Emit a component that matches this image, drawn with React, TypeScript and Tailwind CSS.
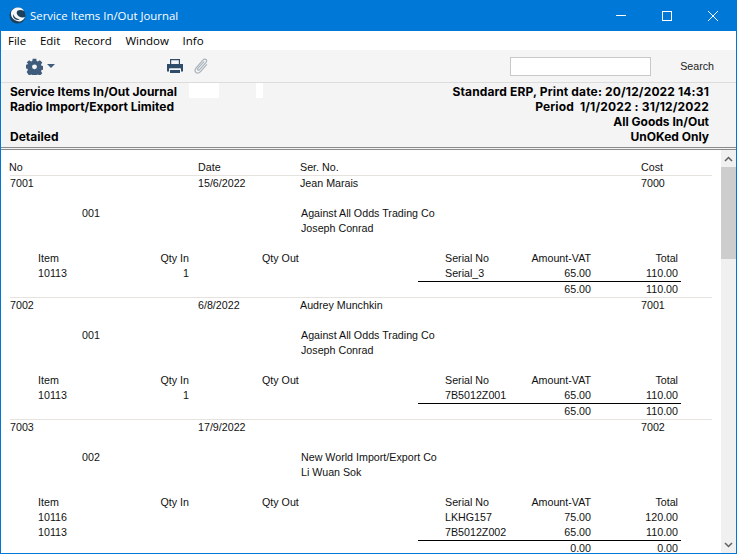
import { ReactNode } from 'react';

const Gear = () => (
  <svg width="17" height="17" viewBox="0 0 24 24" className="text-[#3f5c7c]">
    <path
      fill="currentColor"
      fillRule="evenodd"
      d="M9.500 1h5l.6 3.100 1.700.7 2.700-1.800 3.500 3.500-1.800 2.700.7 1.700 3.100.6v5l-3.100.6-.7 1.700 1.800 2.700-3.500 3.500-2.700-1.800-1.700.7-.6 3.100h-5l-.6-3.100-1.700-.7-2.700 1.800L.9 19.700l1.800-2.700-.7-1.700-3.100-.6v-5l3.100-.6.7-1.700L.9 6.500 4.400 3l2.700 1.800 1.700-.7zM12 9a3.500 3.500 0 1 0 0 7 3.500 3.500 0 0 0 0-7z"
    />
  </svg>
);

const Printer = () => (
  <svg width="16" height="14" viewBox="0 0 16 14">
    <path fill="#2f4d6b" d="M3 0h10v5H3zM0 5h16v7.500h-2V9.500H2v3H0zM3 11h10v3H3z" />
    <path fill="#f5f5f5" d="M4.200 1.200h7.600V5H4.200zM2.500 9.500h11V11h-11z" />
  </svg>
);

const Clip = () => (
  <svg width="14" height="16" viewBox="0 0 15 17" fill="none" stroke="#a9b3bc" strokeWidth="1.300" strokeLinecap="round">
    <path d="M13.500 7L7 14.500c-1.500 1.800-3.800 2-5 .8-1.200-1.200-1-3.200.3-4.800L9.500 2.200c1-1.100 2.500-1.400 3.400-.6.900.8.800 2.200-.2 3.300L6 12.300c-.6.700-1.400.8-1.900.4-.5-.5-.4-1.200.2-1.900L10.500 4" />
  </svg>
);

const Logo = () => (
  <svg width="17" height="17" viewBox="0 0 17 17">
    <circle cx="8.500" cy="8.500" r="8" fill="#1e3f5a" />
    <path fill="#f4f7fa" d="M2 6C2.500 2.500 6 .5 9.500.6c2.500.2 4.500 1.400 5.500 3.400-2-1.300-5-1.500-6.500-.2C7 5 7.500 8 10 9.500c2 1.200 4.500 1.300 6 .6-.8 2-2.500 3.800-5 4.300C6 14.500 1.500 11 2 6z" />
    <path fill="#1e3f5a" d="M4 7c1 3 3.500 5 7 5.500-2.500 1-5.500 0-6.500-2C4 9.500 3.800 8 4 7z" />
  </svg>
);

const Divider = ({ dark = false }: { dark?: boolean }) => (
  <div className={dark ? 'h-px bg-black' : 'h-px bg-[#e6e3de]'} />
);

// main line of a record
const MainRow = ({ no, date, name, cost }: { no: string; date: string; name: string; cost: string }) => (
  <div className="flex h-[15px] items-center pl-[9px]">
    <div className="w-[188px]">{no}</div>
    <div className="w-[102px]">{date}</div>
    <div className="w-[341px]">{name}</div>
    <div>{cost}</div>
  </div>
);

const Line = ({ code, children }: { code?: string; children?: ReactNode }) => (
  <div className="flex h-[15px] items-center pl-[81px]">
    <div className="w-[219px]">{code}</div>
    <div>{children}</div>
  </div>
);

type ItemProps = { item?: string; qtyIn?: string; qtyOut?: string; serial?: string; amount?: string; total?: string };

const ItemRow = ({ item, qtyIn, qtyOut, serial, amount, total }: ItemProps) => (
  <div className="flex h-[15px] items-center pl-[37px]">
    <div className="w-[80px]">{item}</div>
    <div className="w-[71px] text-right">{qtyIn}</div>
    <div className="w-[73px]" />
    <div className="w-[183px]">{qtyOut}</div>
    <div className="w-[80px]">{serial}</div>
    <div className="w-[66px] text-right">{amount}</div>
    <div className="w-[87px] text-right">{total}</div>
  </div>
);

const TotalRule = () => (
  <div className="pl-[417px]">
    <div className="w-[263px]">
      <Divider dark />
    </div>
  </div>
);

type Rec = {
  no: string;
  date: string;
  name: string;
  cost: string;
  code: string;
  company: string;
  contact: string;
  items: ItemProps[];
  sumAmount: string;
  sumTotal: string;
};

const records: Rec[] = [
  {
    no: '7001',
    date: '15/6/2022',
    name: 'Jean Marais',
    cost: '7000',
    code: '001',
    company: 'Against All Odds Trading Co',
    contact: 'Joseph Conrad',
    items: [{ item: '10113', qtyIn: '1', serial: 'Serial_3', amount: '65.00', total: '110.00' }],
    sumAmount: '65.00',
    sumTotal: '110.00',
  },
  {
    no: '7002',
    date: '6/8/2022',
    name: 'Audrey Munchkin',
    cost: '7001',
    code: '001',
    company: 'Against All Odds Trading Co',
    contact: 'Joseph Conrad',
    items: [{ item: '10113', qtyIn: '1', serial: '7B5012Z001', amount: '65.00', total: '110.00' }],
    sumAmount: '65.00',
    sumTotal: '110.00',
  },
  {
    no: '7003',
    date: '17/9/2022',
    name: '',
    cost: '7002',
    code: '002',
    company: 'New World Import/Export Co',
    contact: 'Li Wuan Sok',
    items: [
      { item: '10116', serial: 'LKHG157', amount: '75.00', total: '120.00' },
      { item: '10113', serial: '7B5012Z002', amount: '65.00', total: '110.00' },
    ],
    sumAmount: '0.00',
    sumTotal: '0.00',
  },
];

const Record = ({ rec }: { rec: Rec }) => (
  <div>
    <MainRow no={rec.no} date={rec.date} name={rec.name} cost={rec.cost} />
    <Line />
    <Line code={rec.code}>{rec.company}</Line>
    <Line>{rec.contact}</Line>
    <Line />
    <ItemRow item="Item" qtyIn="Qty In" qtyOut="Qty Out" serial="Serial No" amount="Amount-VAT" total="Total" />
    {rec.items.map((it, i) => (
      <ItemRow key={i} {...it} />
    ))}
    <TotalRule />
    <ItemRow amount={rec.sumAmount} total={rec.sumTotal} />
  </div>
);

export default function App() {
  return (
    <div className="flex h-[554px] w-[737px] flex-col overflow-hidden border-x border-b border-[#0078d7] bg-white font-['Liberation_Sans',sans-serif] text-[10.700px] text-[#111]">
      <div className="flex h-[31px] shrink-0 items-center bg-[#0078d7] pl-[8px] text-white">
        <Logo />
        <div className="ml-[4px] font-['Open_Sans',sans-serif] text-[11.400px]">Service Items In/Out Journal</div>
        <div className="ml-auto flex items-center">
          <div className="flex w-[46px] justify-center"><div className="h-px w-[10px] bg-white" /></div>
          <div className="flex w-[46px] justify-center"><div className="h-[10px] w-[10px] border border-white" /></div>
          <div className="flex w-[46px] justify-center">
            <svg width="10" height="10" viewBox="0 0 10 10" stroke="white" strokeWidth="1"><path d="M0 0l10 10M10 0L0 10" /></svg>
          </div>
        </div>
      </div>
      <div className="flex h-[19px] shrink-0 items-center gap-[13.700px] pl-[7px] font-['Open_Sans',sans-serif] text-[11.500px] text-black">
        <span>File</span><span>Edit</span><span>Record</span><span>Window</span><span>Info</span>
      </div>
      <div className="flex h-[33px] shrink-0 items-center border-b border-[#dcdcdc] bg-[#f5f5f5] pl-[25px] pr-[22px]">
        <Gear />
        <div className="ml-[4px] h-0 w-0 border-x-[4px] border-t-[4px] border-x-transparent border-t-[#3f5c7c]" />
        <div className="ml-[112px]"><Printer /></div>
        <div className="ml-[11px]"><Clip /></div>
        <div className="ml-auto h-[19px] w-[141px] border border-[#c8c8c8] bg-white" />
        <div className="ml-[29px] text-[#222]">Search</div>
      </div>
      <div className="relative flex h-[64px] shrink-0 justify-between bg-[#f4f4f4] pl-[9px] pr-[27px] pt-px font-['Inter',sans-serif] text-[12px] font-bold leading-[15px] text-black">
        <div>
          <div>Service Items In/Out Journal</div>
          <div>Radio Import/Export Limited</div>
          <div>&nbsp;</div>
          <div>Detailed</div>
        </div>
        <div className="text-right">
          <div className="tracking-[0.15px]">Standard ERP, Print date: 20/12/2022 14:31</div>
          <div className="tracking-[0.15px]">Period&nbsp;&nbsp;1/1/2022 : 31/12/2022</div>
          <div>All Goods In/Out</div>
          <div>UnOKed Only</div>
        </div>
        <div className="absolute left-[188px] top-0 h-[15px] w-[30px] bg-white" />
        <div className="absolute left-[255px] top-0 h-[15px] w-[7px] bg-white" />
      </div>
      <div className="h-[3px] shrink-0 border-y border-[#8a8a8a] bg-[#f4f4f4]" />
      <div className="flex min-h-0 flex-1">
        <div className="min-w-0 flex-1 pt-[10px]">
          <div className="flex h-[15px] items-center pl-[8px]">
            <div className="w-[189px]">No</div>
            <div className="w-[102px]">Date</div>
            <div className="w-[341px]">Ser. No.</div>
            <div>Cost</div>
          </div>
          <div className="ml-[9px] mr-[9px]"><Divider /></div>
          {records.map((rec, i) => (
            <div key={rec.no}>
              {i > 0 && <div className="ml-[9px] mr-[9px]"><Divider /></div>}
              <Record rec={rec} />
            </div>
          ))}
        </div>
        <div className="flex w-[15px] shrink-0 flex-col bg-[#f0f0f0]">
          <div className="flex h-[17px] items-center justify-center">
            <svg width="9" height="6" viewBox="0 0 9 6" fill="none" stroke="#606060" strokeWidth="1.500"><path d="M1 5l3.500-3.500L8 5" /></svg>
          </div>
          <div className="h-[92px] bg-[#cdcdcd]" />
          <div className="mt-auto flex h-[17px] items-center justify-center">
            <svg width="9" height="6" viewBox="0 0 9 6" fill="none" stroke="#606060" strokeWidth="1.500"><path d="M1 1l3.500 3.500L8 1" /></svg>
          </div>
        </div>
      </div>
    </div>
  );
}
